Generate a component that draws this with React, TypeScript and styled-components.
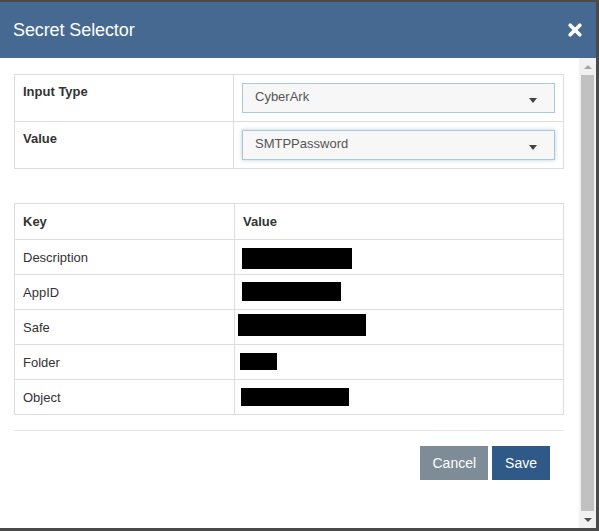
import React from "react";
import styled, { createGlobalStyle } from "styled-components";

const GlobalStyle = createGlobalStyle`
  html, body {
    margin: 0;
    padding: 0;
    background: #ffffff;
  }
  body {
    font-family: "Liberation Sans", Arial, sans-serif;
    font-size: 13px;
    color: #333333;
  }
`;

const Modal = styled.div`
  width: 599px;
  height: 531px;
  box-sizing: border-box;
  border-top: 2px solid #4a4a4a;
  border-right: 3px solid #4a4a4a;
  border-bottom: 3px solid #4a4a4a;
  display: flex;
  flex-direction: column;
  background: #ffffff;
`;

const Header = styled.div`
  height: 56px;
  flex-shrink: 0;
  background: #456990;
  display: flex;
  align-items: center;
  justify-content: space-between;
  padding: 0 13px 0 13px;
`;

const Title = styled.h4`
  margin: 0;
  font-size: 18px;
  font-weight: normal;
  color: #ffffff;
  letter-spacing: -0.1px;
`;

const CloseButton = styled.button`
  border: none;
  background: transparent;
  padding: 0;
  width: 16px;
  height: 16px;
  display: flex;
  align-items: center;
  justify-content: center;
  cursor: pointer;
`;

const Body = styled.div`
  flex: 1;
  display: flex;
  min-height: 0;
`;

const Content = styled.div`
  flex: 1;
  padding: 16px 15px 0 14px;
  display: flex;
  flex-direction: column;
`;

const Table = styled.table<{ gapBelow?: number }>`
  width: 100%;
  border-collapse: collapse;
  margin-bottom: ${(p) => p.gapBelow ?? 0}px;

  td, th {
    border: 1px solid #dddddd;
    text-align: left;
  }
`;

const LabelCell = styled.td`
  width: 202px;
  padding: 8px 8px;
  vertical-align: top;
  font-weight: bold;
  line-height: 18px;
`;

const InputCell = styled.td`
  padding: 8px 8px 8px 8px;
`;

const Select = styled.div<{ focused?: boolean }>`
  height: 30px;
  box-sizing: border-box;
  border: 1px solid #a9c9d8;
  background: #f7f7f7;
  display: flex;
  align-items: center;
  justify-content: space-between;
  padding: 0 17px 0 12px;
  color: #555555;
  font-size: 13px;
  box-shadow: ${(p) => (p.focused ? "0 0 4px rgba(102, 140, 170, 0.45)" : "none")};

  span {
    margin-top: -3px;
  }
`;

const Caret = styled.span`
  width: 0;
  height: 0;
  border-left: 4px solid transparent;
  border-right: 4px solid transparent;
  border-top: 5px solid #444444;
  margin-top: 4px !important;
`;

const HeadCell = styled.th`
  height: 35px;
  padding: 0 8px;
  font-weight: bold;
  vertical-align: middle;
`;

const KeyCell = styled.td`
  width: 203px;
  height: 34px;
  padding: 0 8px;
  vertical-align: middle;
  color: #333333;
`;

const ValueCell = styled.td`
  padding: 0;
  vertical-align: top;
`;

const Redacted = styled.div<{ w: number; h: number; x: number; y: number }>`
  width: ${(p) => p.w}px;
  height: ${(p) => p.h}px;
  margin-left: ${(p) => p.x}px;
  margin-top: ${(p) => p.y}px;
  background: #000000;
`;

const Footer = styled.div`
  margin-top: 15px;
  border-top: 1px solid #e5e5e5;
  padding-top: 15px;
  padding-right: 14px;
  display: flex;
  justify-content: flex-end;
  gap: 4px;
`;

const Button = styled.button<{ variant: "cancel" | "save" }>`
  height: 34px;
  padding: 0 ${(p) => (p.variant === "save" ? 13 : 12)}px;
  border: none;
  border-radius: 0;
  font-family: "Liberation Sans", Arial, sans-serif;
  font-size: 14px;
  color: #ffffff;
  background: ${(p) => (p.variant === "save" ? "#2f5a87" : "#7d8c97")};
  cursor: pointer;
`;

const Scrollbar = styled.div`
  width: 17px;
  flex-shrink: 0;
  background: #f1f1f1;
  display: flex;
  flex-direction: column;
  align-items: center;
`;

const ScrollArrow = styled.div<{ up?: boolean }>`
  height: 17px;
  width: 100%;
  display: flex;
  align-items: center;
  justify-content: center;

  &::after {
    content: "";
    width: 0;
    height: 0;
    border-left: 4px solid transparent;
    border-right: 4px solid transparent;
    ${(p) =>
      p.up ? "border-bottom: 4px solid #a3a3a3;" : "border-top: 4px solid #505050;"}
  }
`;

const Thumb = styled.div`
  flex: 1;
  width: 13px;
  background: #c1c1c1;
`;

const details = [
  { key: "Description", w: 110, h: 21, x: 7, y: 8 },
  { key: "AppID", w: 99, h: 19, x: 7, y: 7 },
  { key: "Safe", w: 128, h: 22, x: 3, y: 4 },
  { key: "Folder", w: 37, h: 17, x: 5, y: 8 },
  { key: "Object", w: 108, h: 18, x: 6, y: 8 },
];

export default function App() {
  return (
    <>
      <GlobalStyle />
      <Modal>
        <Header>
          <Title>Secret Selector</Title>
          <CloseButton aria-label="Close">
            <svg width="14" height="14" viewBox="0 0 14 14">
              <path
                d="M2.2 2.2 L11.8 11.8 M11.8 2.2 L2.2 11.8"
                stroke="#ffffff"
                strokeWidth="3.6"
                strokeLinecap="round"
              />
            </svg>
          </CloseButton>
        </Header>
        <Body>
          <Content>
            <Table gapBelow={34}>
              <tbody>
                <tr>
                  <LabelCell>Input Type</LabelCell>
                  <InputCell>
                    <Select>
                      <span>CyberArk</span>
                      <Caret />
                    </Select>
                  </InputCell>
                </tr>
                <tr>
                  <LabelCell>Value</LabelCell>
                  <InputCell>
                    <Select focused>
                      <span>SMTPPassword</span>
                      <Caret />
                    </Select>
                  </InputCell>
                </tr>
              </tbody>
            </Table>
            <Table>
              <thead>
                <tr>
                  <HeadCell style={{ width: 203 }}>Key</HeadCell>
                  <HeadCell>Value</HeadCell>
                </tr>
              </thead>
              <tbody>
                {details.map((d) => (
                  <tr key={d.key}>
                    <KeyCell>{d.key}</KeyCell>
                    <ValueCell>
                      <Redacted w={d.w} h={d.h} x={d.x} y={d.y} />
                    </ValueCell>
                  </tr>
                ))}
              </tbody>
            </Table>
            <Footer>
              <Button variant="cancel">Cancel</Button>
              <Button variant="save">Save</Button>
            </Footer>
          </Content>
          <Scrollbar>
            <ScrollArrow up />
            <Thumb />
            <ScrollArrow />
          </Scrollbar>
        </Body>
      </Modal>
    </>
  );
}
